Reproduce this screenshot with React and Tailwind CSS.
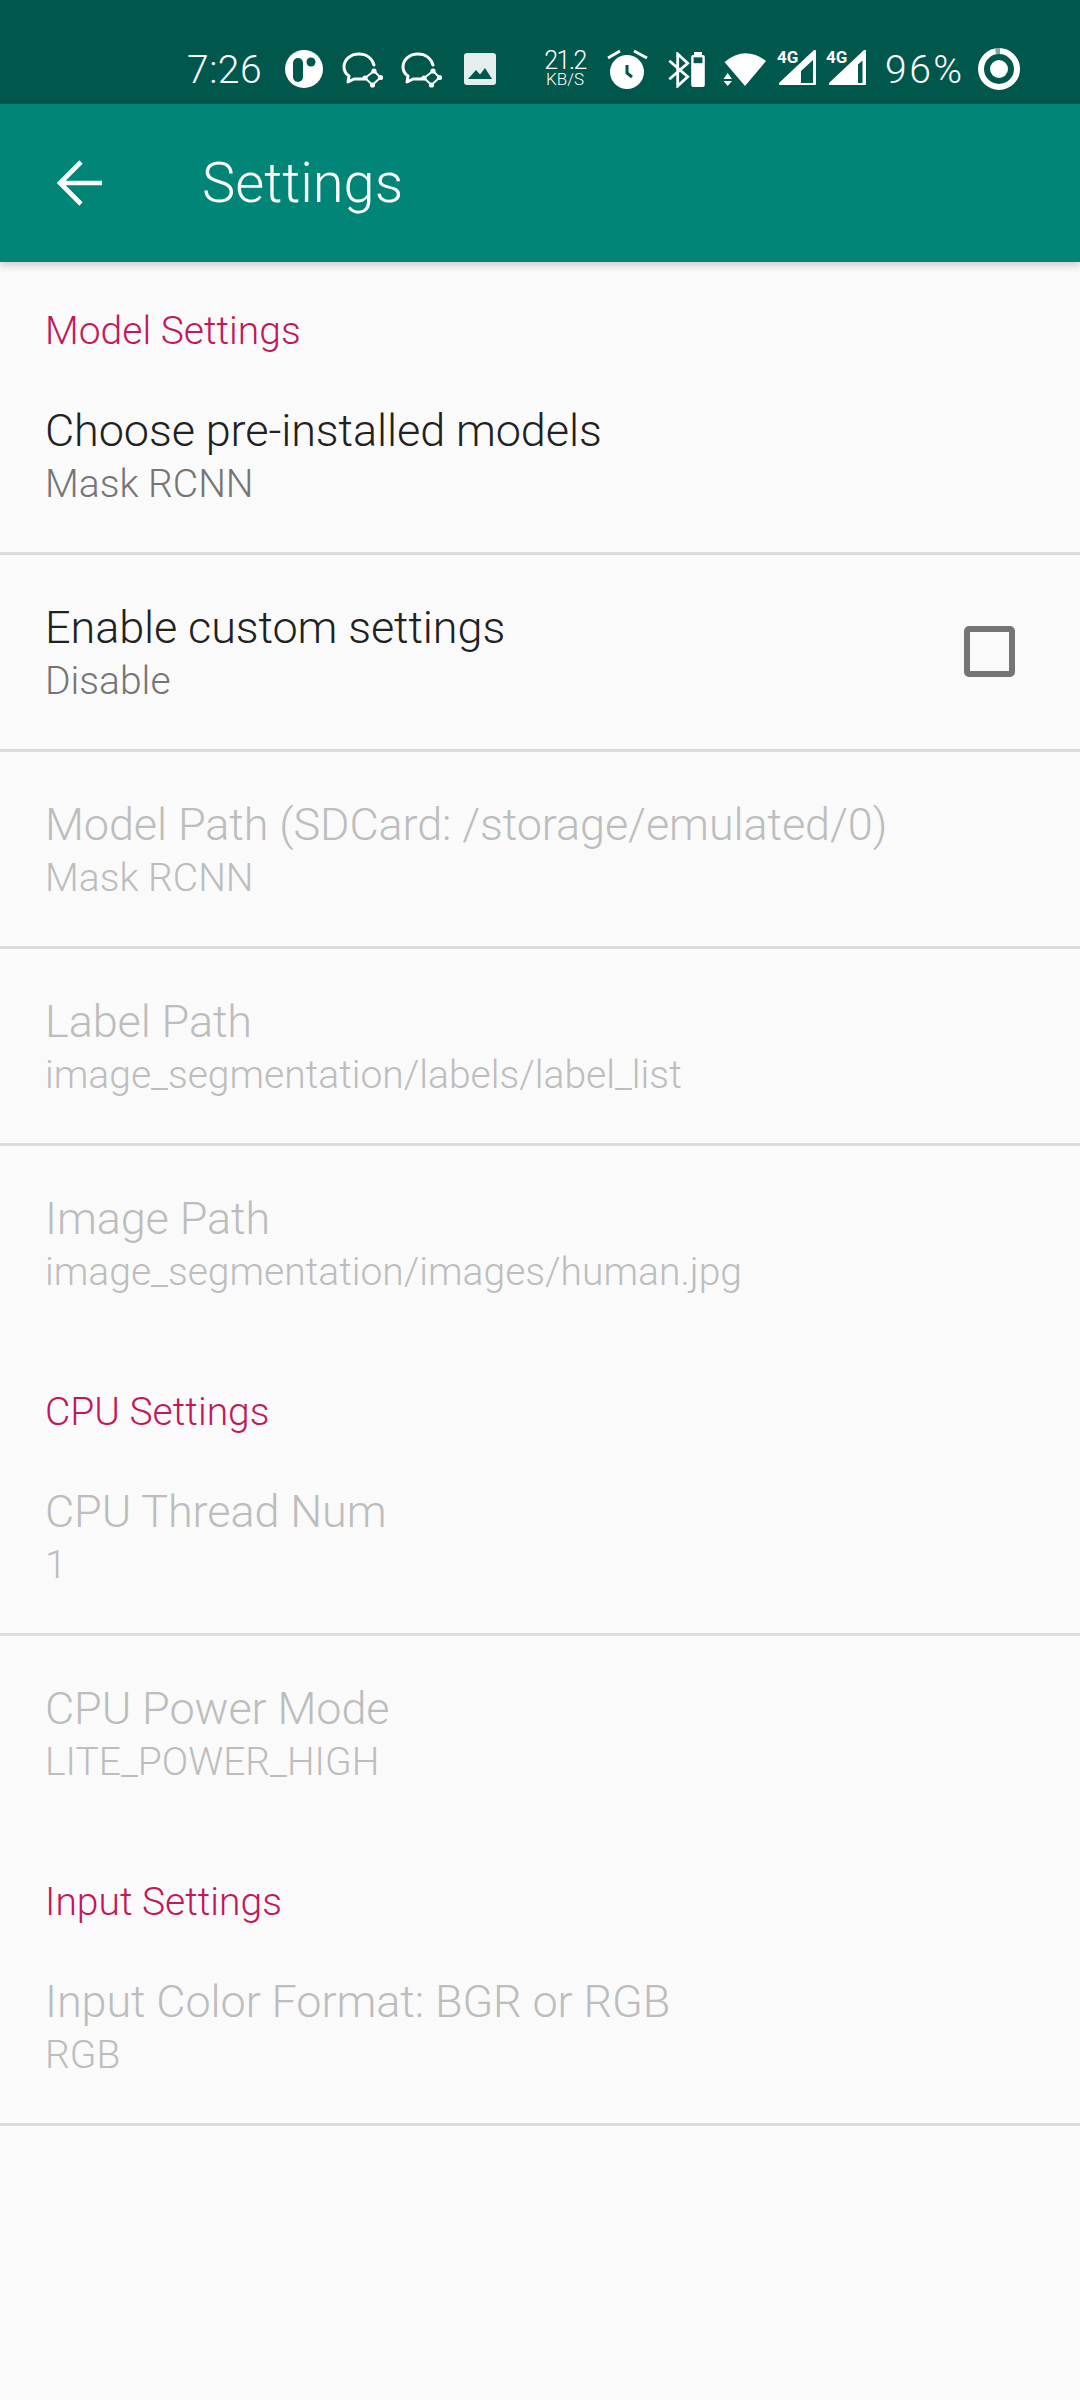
const font = { fontFamily: 'Roboto, sans-serif' };

const sections = [
  {
    title: 'Model Settings',
    rows: [
      { title: 'Choose pre-installed models', sub: 'Mask RCNN', enabled: true, divider: true },
      { title: 'Enable custom settings', sub: 'Disable', enabled: true, divider: true, checkbox: true },
      { title: 'Model Path (SDCard: /storage/emulated/0)', sub: 'Mask RCNN', divider: true },
      { title: 'Label Path', sub: 'image_segmentation/labels/label_list', divider: true },
      { title: 'Image Path', sub: 'image_segmentation/images/human.jpg' },
    ],
  },
  {
    title: 'CPU Settings',
    rows: [
      { title: 'CPU Thread Num', sub: '1', divider: true },
      { title: 'CPU Power Mode', sub: 'LITE_POWER_HIGH' },
    ],
  },
  {
    title: 'Input Settings',
    rows: [{ title: 'Input Color Format: BGR or RGB', sub: 'RGB', divider: true }],
  },
];

function ChatIcon({ className }) {
  return (
    <svg viewBox="0 0 41 36" className={className} fill="none" stroke="white">
      <path d="M32 13 C30 6 24 2 17 2 C8 2 2 8 2 15 C2 19 4 22 7 24 L6 30 L12 27 L21 27" strokeWidth="3" strokeLinecap="round" strokeLinejoin="round" />
      <path d="M32 19 L38.5 25.5 L30.5 33 L23 26 Z" strokeWidth="2" />
      <circle cx="32" cy="19" r="2.6" fill="white" stroke="none" />
      <circle cx="38.5" cy="25.5" r="2.6" fill="white" stroke="none" />
      <circle cx="30.5" cy="33" r="2.6" fill="white" stroke="none" />
      <circle cx="23" cy="26" r="2.6" fill="white" stroke="none" />
    </svg>
  );
}

function SignalIcon({ className, hollow }) {
  return (
    <svg viewBox="0 0 38 36" className={className} fill="white">
      <path fillRule="evenodd" d={`M0 33 L35 0 Q37 -1 37 1 L37 34 Q37 35 36 35 L1 35 Q-1 35 0 33 Z ${hollow}`} />
    </svg>
  );
}

function StatusBar() {
  return (
    <div className="h-[104px] bg-[#00574b] flex items-start pt-[48px] pl-[187px] text-white" style={font}>
      <span className="text-[39px] leading-[44px] w-[98px] font-light tracking-[0.5px]">7:26</span>
      <svg viewBox="0 0 38 38" className="w-[38px] h-[38px] mt-[2px]">
        <circle cx="19" cy="19" r="19" fill="white" />
        <rect x="8" y="8" width="10" height="24" rx="5" fill="#00574b" />
        <circle cx="26" cy="12" r="4.5" fill="#00574b" />
      </svg>
      <ChatIcon className="w-[41px] h-[36px] ml-[19px] mt-[4px]" />
      <ChatIcon className="w-[41px] h-[36px] ml-[18px] mt-[4px]" />
      <svg viewBox="0 0 32 32" className="w-[32px] h-[32px] ml-[22px] mt-[5px]">
        <rect width="32" height="32" rx="3" fill="#e4eeec" />
        <path d="M4 26 L12 17 L16 21.5 L21 15 L28 26 Z" fill="#00574b" />
      </svg>
      <div className="w-[42px] ml-[48px] mt-[2px] flex flex-col items-center">
        <span className="text-[25px] leading-[22px] tracking-[-1.5px] font-light">21.2</span>
        <span className="text-[17px] leading-[15px] font-light">KB/S</span>
      </div>
      <svg viewBox="0 0 44 40" className="w-[44px] h-[40px] ml-[18px] mt-[1px]">
        <circle cx="23" cy="23" r="17" fill="white" />
        <path d="M23 16 L23 24 L28 28" stroke="#00574b" strokeWidth="3" fill="none" />
        <path d="M4 9 L16 2 M30 2 L43 9" stroke="white" strokeWidth="3" />
      </svg>
      <svg viewBox="0 0 22 36" className="w-[22px] h-[36px] ml-[20px] mt-[4px]" fill="none" stroke="white" strokeWidth="2.8">
        <path d="M1.3 8.7 L19.7 24.7 L9.7 34 L9.7 2 L19.7 11.3 L1.3 27.3" />
      </svg>
      <svg viewBox="0 0 14 36" className="w-[14px] h-[35px] ml-[1px] mt-[4px]">
        <path d="M3 0 L11 0 L11 3 L12 3 Q14 3 14 5 L14 34 Q14 36 12 36 L2 36 Q0 36 0 34 L0 5 Q0 3 2 3 L3 3 Z" fill="white" />
        <rect x="2.5" y="5.5" width="9" height="6" fill="#00574b" />
      </svg>
      <svg viewBox="0 0 44 36" className="w-[44px] h-[36px] ml-[18px] mt-[4px]" fill="white">
        <path d="M1.5 10 Q22 -7 43 9 L22 34 Z" />
        <path d="M0.5 27 L9 27 L4.7 21 Z M0.5 29 L9 29 L4.7 34 Z" />
      </svg>
      <div className="relative w-[41px] h-[38px] ml-[10px] mt-[2px]">
        <SignalIcon className="w-[38px] h-[36px] absolute left-[2px] top-0" hollow="M22 21 L34 10 L34 33 L22 33 Z" />
        <span className="absolute left-0 top-[-2px] text-[17px] leading-[18px] font-bold">4G</span>
      </div>
      <div className="relative w-[41px] h-[38px] ml-[8px] mt-[2px]">
        <SignalIcon className="w-[38px] h-[36px] absolute left-[3px] top-0" hollow="M29 14.6 L33.5 10.5 L33.5 33 L29 33 Z" />
        <span className="absolute left-0 top-[-2px] text-[17px] leading-[18px] font-bold">4G</span>
      </div>
      <span className="text-[39px] leading-[44px] ml-[18px] w-[93px] font-light tracking-[2.5px]">96%</span>
      <svg viewBox="0 0 42 42" className="w-[42px] h-[42px]" fill="none">
        <circle cx="21" cy="21" r="18" stroke="white" strokeWidth="6" />
        <path d="M17 0 L22 0 L22 6 L18 6 Z" fill="#7fa9a3" />
        <circle cx="21" cy="21" r="9" fill="white" />
      </svg>
    </div>
  );
}

function Row({ row }) {
  return (
    <div className={`h-[197px] pl-[45px] pr-[65px] flex items-start justify-between ${row.divider ? 'border-b-[3px] border-[#dcdcdc]' : ''}`}>
      <div className="pt-[47px] font-light">
        <div className={`text-[45px] leading-[52px] tracking-[-0.1px] ${row.enabled ? 'text-[#212121]' : 'text-[#bdbdbd]'}`}>{row.title}</div>
        <div className={`text-[39px] leading-[44px] mt-[5px] ${row.enabled ? 'text-[#757575]' : 'text-[#bdbdbd]'}`}>{row.sub}</div>
      </div>
      {row.checkbox && (
        <div className="mt-[71px] w-[51px] h-[51px] rounded-[5px] border-[6px] border-[#757575]" />
      )}
    </div>
  );
}

export default function App() {
  return (
    <div className="w-[1080px] h-[2400px] bg-[#fafafa] overflow-hidden" style={font}>
      <StatusBar />
      <div className="h-[158px] bg-[#008577] flex items-center shadow-[0_3px_8px_rgba(0,0,0,0.2)] relative text-white">
        <svg viewBox="0 0 50 48" className="w-[50px] h-[48px] ml-[54px]" fill="none" stroke="white" strokeWidth="4.6">
          <path d="M6 24 L48 24 M27 3 L6 24 L27 45" />
        </svg>
        <span className="ml-[98px] text-[56px] leading-[60px] font-light">Settings</span>
      </div>
      {sections.map((section) => (
        <div key={section.title}>
          <div className="h-[96px] pl-[45px] pt-[47px] text-[39px] leading-[44px] font-light text-[#c2185b]">{section.title}</div>
          {section.rows.map((row) => (
            <Row key={row.title} row={row} />
          ))}
        </div>
      ))}
    </div>
  );
}
